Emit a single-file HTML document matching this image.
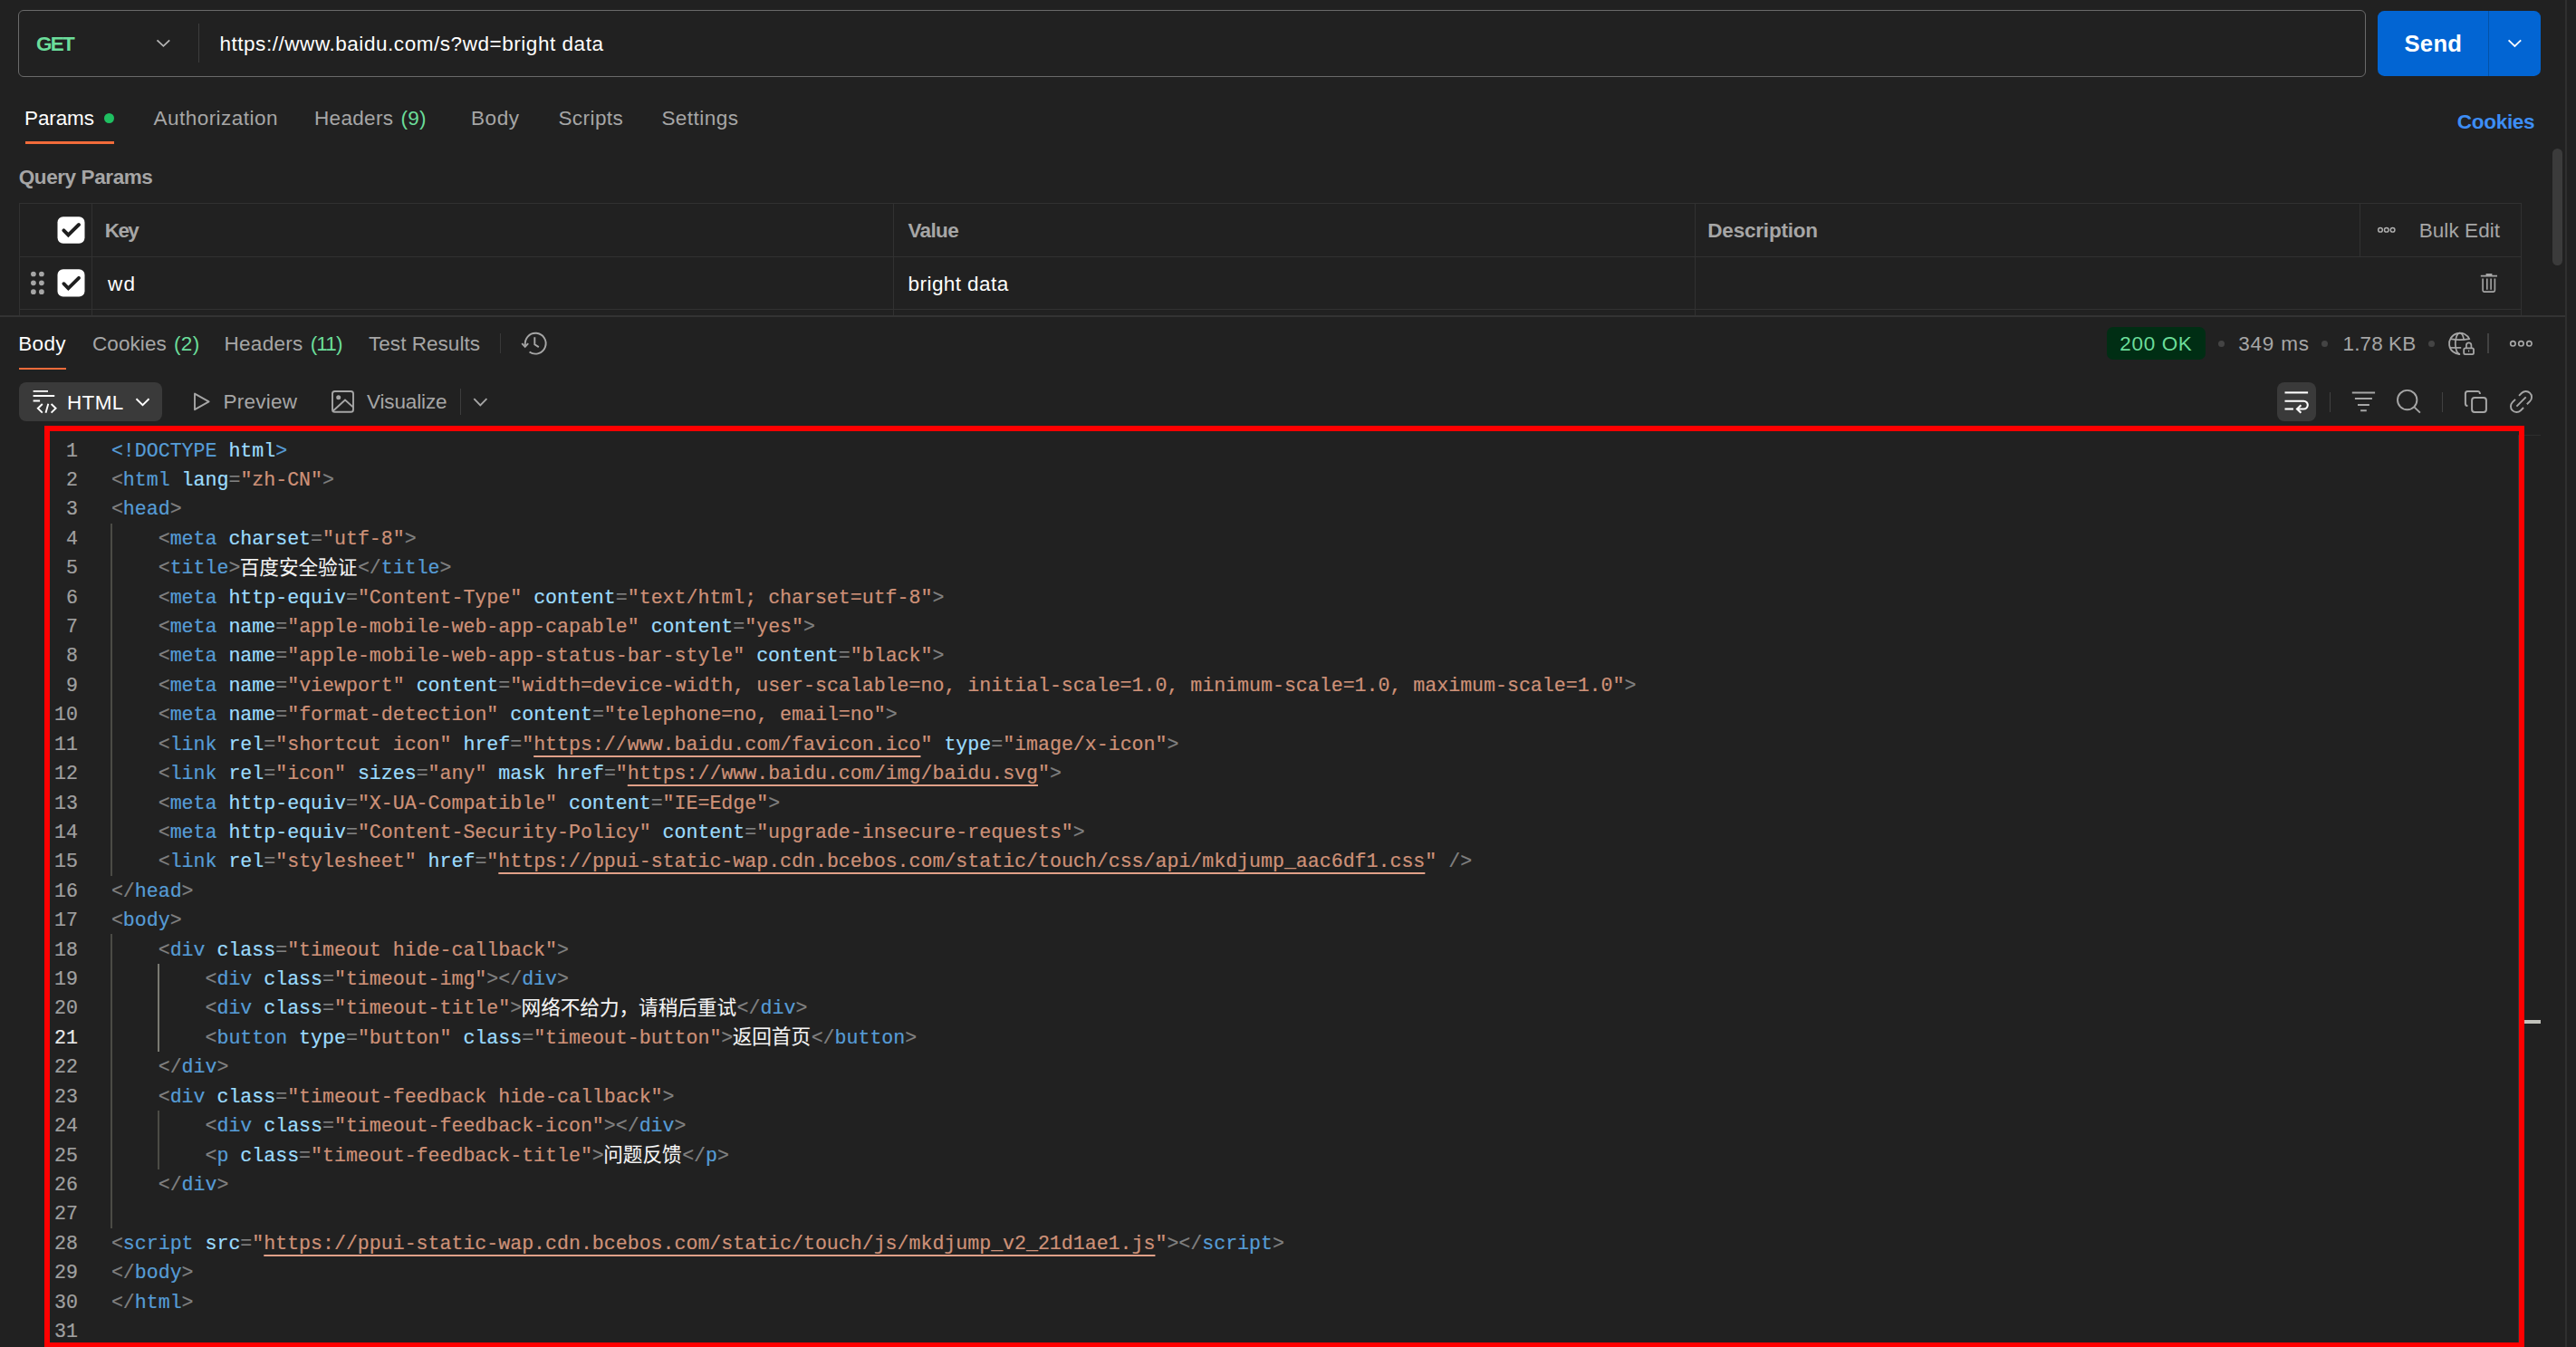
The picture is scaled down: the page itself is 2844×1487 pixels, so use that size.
<!DOCTYPE html>
<html lang="en"><head><meta charset="utf-8"><title>Postman</title>
<style>
html,body{margin:0;padding:0;background:#212121;}
body{width:2844px;height:1487px;position:relative;overflow:hidden;font-family:'Liberation Sans', 'Noto Sans CJK SC', sans-serif;}
.a{position:absolute;}
.t{position:absolute;white-space:pre;line-height:1;}
.code{position:absolute;left:0;top:481.55px;font-family:'Liberation Mono', 'Noto Sans CJK SC', monospace;font-size:21.6px;-webkit-text-stroke:0.2px currentColor;}
.ln{position:absolute;left:0;height:32.4px;line-height:32.4px;white-space:pre;}
.src{letter-spacing:-0.009px}
.num{position:absolute;left:40px;width:46px;text-align:right;color:#8c8c8c;}
.src{position:absolute;left:122.9px;}
.g{color:#808080} .k{color:#569cd6} .n{color:#9cdcfe} .s{color:#ce9178} .u{color:#ce9178;text-decoration:underline;text-decoration-color:#e0a088;text-decoration-thickness:2px;text-underline-offset:6px;text-decoration-skip-ink:none}
.c{color:#f4f4f4;line-height:0;font-weight:400;-webkit-text-stroke:0.1px currentColor;position:relative;top:0.6px;left:-0.6px;}
.guide{position:absolute;width:2px;background:#4a4a45;}
svg{position:absolute;overflow:visible}
</style></head><body>

<div class="a" style="left:2832px;top:0;width:2px;height:1487px;background:#2f2f2f"></div>
<div class="a" style="left:20px;top:11px;width:2592px;height:74px;border:1px solid #6a6a6a;border-radius:6px;box-sizing:border-box"></div>
<div class="a" style="left:219px;top:26px;width:1px;height:43px;background:#3d3d3d"></div>
<div class="a" style="left:2625px;top:11.8px;width:180.2px;height:72.4px;background:#0265d3;border-radius:7.3px"></div>
<div class="a" style="left:2747px;top:12px;width:1px;height:72px;background:#0452a6"></div>
<div class="a" style="left:28px;top:156.3px;width:98px;height:2.7px;background:#f26b3a"></div>
<div class="a" style="left:114.7px;top:124.7px;width:11.6px;height:11.6px;border-radius:50%;background:#1fbf61"></div>
<div class="a" style="left:2818px;top:164px;width:11px;height:129px;border-radius:6px;background:#3b3b3b"></div>
<div class="a" style="left:21px;top:224px;width:2763px;height:1px;background:#313131"></div>
<div class="a" style="left:21px;top:283px;width:2763px;height:1px;background:#313131"></div>
<div class="a" style="left:21px;top:341px;width:2763px;height:1px;background:#313131"></div>
<div class="a" style="left:21px;top:224px;width:1px;height:124px;background:#313131"></div>
<div class="a" style="left:101px;top:224px;width:1px;height:124px;background:#313131"></div>
<div class="a" style="left:986px;top:224px;width:1px;height:124px;background:#313131"></div>
<div class="a" style="left:1871px;top:224px;width:1px;height:124px;background:#313131"></div>
<div class="a" style="left:2605px;top:224px;width:1px;height:59px;background:#313131"></div>
<div class="a" style="left:2783px;top:224px;width:1px;height:124px;background:#313131"></div>
<div class="a" style="left:0;top:348px;width:2832px;height:2px;background:#333"></div>
<svg style="left:0;top:0" width="120" height="340" viewBox="0 0 120 340"><rect x="63.5" y="239.2" width="30" height="29.6" rx="6.2" fill="#fff"/><path d="M70.4 254.3 L75.4 259.4 L87.0 248.0" fill="none" stroke="#1f1f1f" stroke-width="3.9" stroke-linecap="round"/><rect x="63.5" y="297.2" width="30" height="30.4" rx="6.2" fill="#fff"/><path d="M70.4 313.2 L75.4 318.3 L87.0 306.9" fill="none" stroke="#1f1f1f" stroke-width="3.9" stroke-linecap="round"/><circle cx="36.9" cy="302.50" r="2.85" fill="#a6a6a6"/><circle cx="45.9" cy="302.50" r="2.85" fill="#a6a6a6"/><circle cx="36.9" cy="312.35" r="2.85" fill="#a6a6a6"/><circle cx="45.9" cy="312.35" r="2.85" fill="#a6a6a6"/><circle cx="36.9" cy="322.20" r="2.85" fill="#a6a6a6"/><circle cx="45.9" cy="322.20" r="2.85" fill="#a6a6a6"/></svg>
<div class="a" style="left:21px;top:405.7px;width:52px;height:2.5px;background:#f26b3a"></div>
<div class="a" style="left:552px;top:368px;width:1px;height:22px;background:#383838"></div>
<div class="a" style="left:21.2px;top:422px;width:157.6px;height:42.7px;border-radius:8px;background:#3a3a3a"></div>
<div class="a" style="left:508px;top:429px;width:1px;height:29px;background:#3d3d3d"></div>
<div class="a" style="left:2326.2px;top:361.2px;width:108.8px;height:35.8px;border-radius:7px;background:#002e14"></div>
<div class="a" style="left:2449.0px;top:375.7px;width:7.2px;height:7.2px;border-radius:50%;background:#444"></div>
<div class="a" style="left:2563.2000000000003px;top:375.7px;width:7.2px;height:7.2px;border-radius:50%;background:#444"></div>
<div class="a" style="left:2680.9px;top:375.7px;width:7.2px;height:7.2px;border-radius:50%;background:#444"></div>
<div class="a" style="left:2746px;top:368px;width:2px;height:22px;background:#424242"></div>
<div class="a" style="left:2513.8px;top:422px;width:43.2px;height:42.8px;border-radius:8px;background:#3a3a3a"></div>
<div class="a" style="left:2572px;top:433px;width:1px;height:22px;background:#414141"></div>
<div class="a" style="left:2696px;top:433px;width:1px;height:22px;background:#414141"></div>
<div class="a" style="left:2780px;top:480px;width:1px;height:1007px;background:#2c3636"></div>
<div class="a" style="left:2780px;top:480px;width:25px;height:1px;background:#2e2e2e"></div>
<div class="a" style="left:49px;top:470px;width:2738px;height:1030px;border:6px solid #ff0000;border-right-width:6.3px;border-bottom:none;box-sizing:border-box"></div>
<div class="a" style="left:49px;top:1481.8px;width:2738px;height:6px;background:#ff0000"></div>
<div class="a" style="left:2787px;top:1126.2px;width:18px;height:4px;background:#c2c2bb"></div>
<div class="t" style="left:39.90px;top:38.20px;font-size:22.5px;font-weight:700;color:#6bdd9a;letter-spacing:-1.733px">GET</div>
<div class="t" style="left:242.40px;top:37.90px;font-size:22.5px;font-weight:400;color:#ffffff;letter-spacing:0.547px">https://www.baidu.com/s?wd=bright data</div>
<div class="t" style="left:27.10px;top:120.00px;font-size:22.5px;font-weight:400;color:#ffffff;letter-spacing:-0.146px">Params</div>
<div class="t" style="left:169.50px;top:120.00px;font-size:22.5px;font-weight:400;color:#a6a6a6;letter-spacing:0.471px">Authorization</div>
<div class="t" style="left:347.00px;top:120.00px;font-size:22.5px;font-weight:400;color:#a6a6a6;letter-spacing:0.326px">Headers</div>
<div class="t" style="left:442.50px;top:120.00px;font-size:22.5px;font-weight:400;color:#6bdd9a;letter-spacing:0.250px">(9)</div>
<div class="t" style="left:520.00px;top:120.00px;font-size:22.5px;font-weight:400;color:#a6a6a6;letter-spacing:0.568px">Body</div>
<div class="t" style="left:616.40px;top:120.00px;font-size:22.5px;font-weight:400;color:#a6a6a6;letter-spacing:0.439px">Scripts</div>
<div class="t" style="left:730.40px;top:120.00px;font-size:22.5px;font-weight:400;color:#a6a6a6;letter-spacing:0.470px">Settings</div>
<div class="t" style="left:2712.80px;top:123.80px;font-size:22.5px;font-weight:700;color:#3d8ef5;letter-spacing:-0.289px">Cookies</div>
<div class="t" style="left:2654.40px;top:35.50px;font-size:25.6px;font-weight:700;color:#ffffff;letter-spacing:0.341px">Send</div>
<div class="t" style="left:20.70px;top:185.20px;font-size:22.5px;font-weight:700;color:#a6a6a6;letter-spacing:-0.399px">Query Params</div>
<div class="t" style="left:115.80px;top:244.40px;font-size:22.5px;font-weight:700;color:#a6a6a6;letter-spacing:-1.641px">Key</div>
<div class="t" style="left:1002.50px;top:244.40px;font-size:22.5px;font-weight:700;color:#a6a6a6;letter-spacing:-0.649px">Value</div>
<div class="t" style="left:1885.30px;top:244.40px;font-size:22.5px;font-weight:700;color:#a6a6a6;letter-spacing:-0.198px">Description</div>
<div class="t" style="left:2670.70px;top:244.20px;font-size:22.5px;font-weight:400;color:#a6a6a6;letter-spacing:0.075px">Bulk Edit</div>
<div class="t" style="left:119.00px;top:303.00px;font-size:22.5px;font-weight:400;color:#ffffff;letter-spacing:1.234px">wd</div>
<div class="t" style="left:1002.60px;top:303.00px;font-size:22.5px;font-weight:400;color:#ffffff;letter-spacing:0.427px">bright data</div>
<div class="t" style="left:20.30px;top:369.30px;font-size:22.5px;font-weight:400;color:#ffffff;letter-spacing:0.301px">Body</div>
<div class="t" style="left:102.00px;top:369.30px;font-size:22.5px;font-weight:400;color:#a6a6a6;letter-spacing:0.084px">Cookies</div>
<div class="t" style="left:192.00px;top:369.30px;font-size:22.5px;font-weight:400;color:#6bdd9a;letter-spacing:0.350px">(2)</div>
<div class="t" style="left:247.50px;top:369.30px;font-size:22.5px;font-weight:400;color:#a6a6a6;letter-spacing:0.292px">Headers</div>
<div class="t" style="left:342.80px;top:369.30px;font-size:22.5px;font-weight:400;color:#6bdd9a;letter-spacing:-0.915px">(11)</div>
<div class="t" style="left:407.00px;top:369.30px;font-size:22.5px;font-weight:400;color:#a6a6a6;letter-spacing:0.041px">Test Results</div>
<div class="t" style="left:73.90px;top:434.20px;font-size:22.5px;font-weight:400;color:#ffffff;letter-spacing:0.383px">HTML</div>
<div class="t" style="left:246.60px;top:433.20px;font-size:22.5px;font-weight:400;color:#a6a6a6;letter-spacing:0.228px">Preview</div>
<div class="t" style="left:405.00px;top:433.20px;font-size:22.5px;font-weight:400;color:#a6a6a6;letter-spacing:-0.130px">Visualize</div>
<div class="t" style="left:2340.30px;top:368.60px;font-size:22.5px;font-weight:400;color:#6bdd9a;letter-spacing:0.657px">200 OK</div>
<div class="t" style="left:2471.30px;top:368.60px;font-size:22.5px;font-weight:400;color:#a6a6a6;letter-spacing:0.761px">349 ms</div>
<div class="t" style="left:2586.60px;top:368.60px;font-size:22.5px;font-weight:400;color:#a6a6a6;letter-spacing:0.090px">1.78 KB</div>
<div class="code">
<div class="ln" style="top:0.00px"><span class="num" style="color:#a0a0a0">1</span><span class="src"><span class="k">&lt;!DOCTYPE</span> <span class="n">html</span><span class="k">&gt;</span></span></div>
<div class="ln" style="top:32.42px"><span class="num" style="color:#a0a0a0">2</span><span class="src"><span class="g">&lt;</span><span class="k">html</span> <span class="n">lang</span><span class="g">=</span><span class="s">&quot;zh-CN&quot;</span><span class="g">&gt;</span></span></div>
<div class="ln" style="top:64.83px"><span class="num" style="color:#a0a0a0">3</span><span class="src"><span class="g">&lt;</span><span class="k">head</span><span class="g">&gt;</span></span></div>
<div class="ln" style="top:97.25px"><span class="num" style="color:#a0a0a0">4</span><span class="src">    <span class="g">&lt;</span><span class="k">meta</span> <span class="n">charset</span><span class="g">=</span><span class="s">&quot;utf-8&quot;</span><span class="g">&gt;</span></span></div>
<div class="ln" style="top:129.67px"><span class="num" style="color:#a0a0a0">5</span><span class="src">    <span class="g">&lt;</span><span class="k">title</span><span class="g">&gt;</span><span class="c">百度安全验证</span><span class="g">&lt;/</span><span class="k">title</span><span class="g">&gt;</span></span></div>
<div class="ln" style="top:162.09px"><span class="num" style="color:#a0a0a0">6</span><span class="src">    <span class="g">&lt;</span><span class="k">meta</span> <span class="n">http-equiv</span><span class="g">=</span><span class="s">&quot;Content-Type&quot;</span> <span class="n">content</span><span class="g">=</span><span class="s">&quot;text/html; charset=utf-8&quot;</span><span class="g">&gt;</span></span></div>
<div class="ln" style="top:194.50px"><span class="num" style="color:#a0a0a0">7</span><span class="src">    <span class="g">&lt;</span><span class="k">meta</span> <span class="n">name</span><span class="g">=</span><span class="s">&quot;apple-mobile-web-app-capable&quot;</span> <span class="n">content</span><span class="g">=</span><span class="s">&quot;yes&quot;</span><span class="g">&gt;</span></span></div>
<div class="ln" style="top:226.92px"><span class="num" style="color:#a0a0a0">8</span><span class="src">    <span class="g">&lt;</span><span class="k">meta</span> <span class="n">name</span><span class="g">=</span><span class="s">&quot;apple-mobile-web-app-status-bar-style&quot;</span> <span class="n">content</span><span class="g">=</span><span class="s">&quot;black&quot;</span><span class="g">&gt;</span></span></div>
<div class="ln" style="top:259.34px"><span class="num" style="color:#a0a0a0">9</span><span class="src">    <span class="g">&lt;</span><span class="k">meta</span> <span class="n">name</span><span class="g">=</span><span class="s">&quot;viewport&quot;</span> <span class="n">content</span><span class="g">=</span><span class="s">&quot;width=device-width, user-scalable=no, initial-scale=1.0, minimum-scale=1.0, maximum-scale=1.0&quot;</span><span class="g">&gt;</span></span></div>
<div class="ln" style="top:291.75px"><span class="num" style="color:#a0a0a0">10</span><span class="src">    <span class="g">&lt;</span><span class="k">meta</span> <span class="n">name</span><span class="g">=</span><span class="s">&quot;format-detection&quot;</span> <span class="n">content</span><span class="g">=</span><span class="s">&quot;telephone=no, email=no&quot;</span><span class="g">&gt;</span></span></div>
<div class="ln" style="top:324.17px"><span class="num" style="color:#a0a0a0">11</span><span class="src">    <span class="g">&lt;</span><span class="k">link</span> <span class="n">rel</span><span class="g">=</span><span class="s">&quot;shortcut icon&quot;</span> <span class="n">href</span><span class="g">=</span><span class="s">&quot;</span><span class="u">https://www.baidu.com/favicon.ico</span><span class="s">&quot;</span> <span class="n">type</span><span class="g">=</span><span class="s">&quot;image/x-icon&quot;</span><span class="g">&gt;</span></span></div>
<div class="ln" style="top:356.59px"><span class="num" style="color:#a0a0a0">12</span><span class="src">    <span class="g">&lt;</span><span class="k">link</span> <span class="n">rel</span><span class="g">=</span><span class="s">&quot;icon&quot;</span> <span class="n">sizes</span><span class="g">=</span><span class="s">&quot;any&quot;</span> <span class="n">mask</span> <span class="n">href</span><span class="g">=</span><span class="s">&quot;</span><span class="u">https://www.baidu.com/img/baidu.svg</span><span class="s">&quot;</span><span class="g">&gt;</span></span></div>
<div class="ln" style="top:389.00px"><span class="num" style="color:#a0a0a0">13</span><span class="src">    <span class="g">&lt;</span><span class="k">meta</span> <span class="n">http-equiv</span><span class="g">=</span><span class="s">&quot;X-UA-Compatible&quot;</span> <span class="n">content</span><span class="g">=</span><span class="s">&quot;IE=Edge&quot;</span><span class="g">&gt;</span></span></div>
<div class="ln" style="top:421.42px"><span class="num" style="color:#a0a0a0">14</span><span class="src">    <span class="g">&lt;</span><span class="k">meta</span> <span class="n">http-equiv</span><span class="g">=</span><span class="s">&quot;Content-Security-Policy&quot;</span> <span class="n">content</span><span class="g">=</span><span class="s">&quot;upgrade-insecure-requests&quot;</span><span class="g">&gt;</span></span></div>
<div class="ln" style="top:453.84px"><span class="num" style="color:#a0a0a0">15</span><span class="src">    <span class="g">&lt;</span><span class="k">link</span> <span class="n">rel</span><span class="g">=</span><span class="s">&quot;stylesheet&quot;</span> <span class="n">href</span><span class="g">=</span><span class="s">&quot;</span><span class="u">https://ppui-static-wap.cdn.bcebos.com/static/touch/css/api/mkdjump_aac6df1.css</span><span class="s">&quot;</span><span class="g"> /&gt;</span></span></div>
<div class="ln" style="top:486.25px"><span class="num" style="color:#a0a0a0">16</span><span class="src"><span class="g">&lt;/</span><span class="k">head</span><span class="g">&gt;</span></span></div>
<div class="ln" style="top:518.67px"><span class="num" style="color:#a0a0a0">17</span><span class="src"><span class="g">&lt;</span><span class="k">body</span><span class="g">&gt;</span></span></div>
<div class="ln" style="top:551.09px"><span class="num" style="color:#a0a0a0">18</span><span class="src">    <span class="g">&lt;</span><span class="k">div</span> <span class="n">class</span><span class="g">=</span><span class="s">&quot;timeout hide-callback&quot;</span><span class="g">&gt;</span></span></div>
<div class="ln" style="top:583.51px"><span class="num" style="color:#a0a0a0">19</span><span class="src">        <span class="g">&lt;</span><span class="k">div</span> <span class="n">class</span><span class="g">=</span><span class="s">&quot;timeout-img&quot;</span><span class="g">&gt;</span><span class="g">&lt;/</span><span class="k">div</span><span class="g">&gt;</span></span></div>
<div class="ln" style="top:615.92px"><span class="num" style="color:#a0a0a0">20</span><span class="src">        <span class="g">&lt;</span><span class="k">div</span> <span class="n">class</span><span class="g">=</span><span class="s">&quot;timeout-title&quot;</span><span class="g">&gt;</span><span class="c">网络不给力，请稍后重试</span><span class="g">&lt;/</span><span class="k">div</span><span class="g">&gt;</span></span></div>
<div class="ln" style="top:648.34px"><span class="num" style="color:#e8e8e8">21</span><span class="src">        <span class="g">&lt;</span><span class="k">button</span> <span class="n">type</span><span class="g">=</span><span class="s">&quot;button&quot;</span> <span class="n">class</span><span class="g">=</span><span class="s">&quot;timeout-button&quot;</span><span class="g">&gt;</span><span class="c">返回首页</span><span class="g">&lt;/</span><span class="k">button</span><span class="g">&gt;</span></span></div>
<div class="ln" style="top:680.76px"><span class="num" style="color:#a0a0a0">22</span><span class="src">    <span class="g">&lt;/</span><span class="k">div</span><span class="g">&gt;</span></span></div>
<div class="ln" style="top:713.17px"><span class="num" style="color:#a0a0a0">23</span><span class="src">    <span class="g">&lt;</span><span class="k">div</span> <span class="n">class</span><span class="g">=</span><span class="s">&quot;timeout-feedback hide-callback&quot;</span><span class="g">&gt;</span></span></div>
<div class="ln" style="top:745.59px"><span class="num" style="color:#a0a0a0">24</span><span class="src">        <span class="g">&lt;</span><span class="k">div</span> <span class="n">class</span><span class="g">=</span><span class="s">&quot;timeout-feedback-icon&quot;</span><span class="g">&gt;</span><span class="g">&lt;/</span><span class="k">div</span><span class="g">&gt;</span></span></div>
<div class="ln" style="top:778.01px"><span class="num" style="color:#a0a0a0">25</span><span class="src">        <span class="g">&lt;</span><span class="k">p</span> <span class="n">class</span><span class="g">=</span><span class="s">&quot;timeout-feedback-title&quot;</span><span class="g">&gt;</span><span class="c">问题反馈</span><span class="g">&lt;/</span><span class="k">p</span><span class="g">&gt;</span></span></div>
<div class="ln" style="top:810.43px"><span class="num" style="color:#a0a0a0">26</span><span class="src">    <span class="g">&lt;/</span><span class="k">div</span><span class="g">&gt;</span></span></div>
<div class="ln" style="top:842.84px"><span class="num" style="color:#a0a0a0">27</span><span class="src"></span></div>
<div class="ln" style="top:875.26px"><span class="num" style="color:#a0a0a0">28</span><span class="src"><span class="g">&lt;</span><span class="k">script</span> <span class="n">src</span><span class="g">=</span><span class="s">&quot;</span><span class="u">https://ppui-static-wap.cdn.bcebos.com/static/touch/js/mkdjump_v2_21d1ae1.js</span><span class="s">&quot;</span><span class="g">&gt;</span><span class="g">&lt;/</span><span class="k">script</span><span class="g">&gt;</span></span></div>
<div class="ln" style="top:907.68px"><span class="num" style="color:#a0a0a0">29</span><span class="src"><span class="g">&lt;/</span><span class="k">body</span><span class="g">&gt;</span></span></div>
<div class="ln" style="top:940.09px"><span class="num" style="color:#a0a0a0">30</span><span class="src"><span class="g">&lt;/</span><span class="k">html</span><span class="g">&gt;</span></span></div>
<div class="ln" style="top:972.51px"><span class="num" style="color:#a0a0a0">31</span><span class="src"></span></div>
<div class="guide" style="left:122px;top:96.1px;height:389.0px;background:#4b4b45"></div>
<div class="guide" style="left:122px;top:549.9px;height:324.2px;background:#4b4b45"></div>
<div class="guide" style="left:174px;top:582.3px;height:97.3px;background:#7a7a72"></div>
<div class="guide" style="left:174px;top:744.4px;height:64.8px;background:#4b4b45"></div>
</div>
<svg style="left:0;top:0" width="2844" height="1487" viewBox="0 0 2844 1487">
<path d="M173.5 44.3 L180.4 50.8 L187.2 44.3" fill="none" stroke="#b4b4b4" stroke-width="1.8" />
<path d="M2769.6 44.4 L2776.4 51 L2783.2 44.4" fill="none" stroke="#ffffff" stroke-width="1.8" />
<path d="M36.6 431.9 H53 M36.6 437 H60.2 M36.6 442.5 H44.1" fill="none" stroke="#ffffff" stroke-width="1.9" />
<path d="M46.8 446 L41.8 450.8 L46.8 455.6 M53.3 445.8 L50.5 455.8 M56.6 446 L61.6 450.8 L56.6 455.6" fill="none" stroke="#ffffff" stroke-width="1.9" />
<path d="M150.5 440.2 L157.5 447.1 L164.5 440.2" fill="none" stroke="#ffffff" stroke-width="1.9" />
<path d="M215 434.6 L215 452.2 L230.6 443.4 Z" fill="none" stroke="#a6a6a6" stroke-width="1.9" stroke-linejoin="round"/>
<rect x="367" y="432" width="23" height="22.8" rx="2.6" fill="none" stroke="#a6a6a6" stroke-width="1.9"/>
<circle cx="373.7" cy="438.8" r="2.5" fill="#a6a6a6"/>
<path d="M367.6 453.8 L381 441.6 L390 449.6" fill="none" stroke="#a6a6a6" stroke-width="1.9" />
<path d="M523.3 440.2 L530.3 447.4 L537.4 440.2" fill="none" stroke="#a6a6a6" stroke-width="1.9" />
<path d="M580.00 381.30 A11.4 11.4 0 1 1 584.54 388.40" fill="none" stroke="#a6a6a6" stroke-width="1.9" />
<path d="M576.2 379.2 L579.7 382.9 L583.2 379.2" fill="none" stroke="#a6a6a6" stroke-width="1.9" />
<path d="M590.3 372.3 V380.2 L594.8 383.1" fill="none" stroke="#a6a6a6" stroke-width="1.9" />
<path d="M2726.55 374.92 A11.7 11.7 0 1 0 2716.11 390.99" fill="none" stroke="#a6a6a6" stroke-width="1.8" />
<path d="M2715.70 391.00 A4.9 11.7 0 0 1 2715.70 367.60 A4.9 11.7 0 0 1 2720.30 375.30" fill="none" stroke="#a6a6a6" stroke-width="1.7" />
<path d="M2705.30 374.10 Q2715.70 376.10 2726.10 374.10" fill="none" stroke="#a6a6a6" stroke-width="1.7" />
<path d="M2705.10 383.90 H2717.20" fill="none" stroke="#a6a6a6" stroke-width="1.7" />
<rect x="2720.2" y="384.3" width="10.8" height="6.9" rx="1.6" fill="#212121" stroke="#a6a6a6" stroke-width="1.8"/>
<path d="M2722.9 384 V381.2 A2.75 2.75 0 0 1 2728.4 381.2 V384" fill="none" stroke="#a6a6a6" stroke-width="1.7" />
<path d="M2725.6 386.4 V388.6" fill="none" stroke="#a6a6a6" stroke-width="1.2" />
<circle cx="2774.4" cy="379.3" r="2.7" fill="none" stroke="#a6a6a6" stroke-width="1.7"/>
<circle cx="2783.4" cy="379.3" r="2.7" fill="none" stroke="#a6a6a6" stroke-width="1.7"/>
<circle cx="2792.4" cy="379.3" r="2.7" fill="none" stroke="#a6a6a6" stroke-width="1.7"/>
<circle cx="2628" cy="253.8" r="2.35" fill="none" stroke="#b0b0b0" stroke-width="1.4"/>
<circle cx="2634.8" cy="253.8" r="2.35" fill="none" stroke="#b0b0b0" stroke-width="1.4"/>
<circle cx="2641.6" cy="253.8" r="2.35" fill="none" stroke="#b0b0b0" stroke-width="1.4"/>
<path d="M2738.8 304.6 H2757 M2744.6 303 H2751.4" fill="none" stroke="#a6a6a6" stroke-width="1.8" />
<path d="M2741.1 307.4 V320.6 Q2741.1 322.1 2742.6 322.1 H2752.9 Q2754.4 322.1 2754.4 320.6 V307.4" fill="none" stroke="#a6a6a6" stroke-width="1.6" />
<path d="M2745.8 307.4 V319.8 M2750.1 307.4 V319.8" fill="none" stroke="#a6a6a6" stroke-width="1.6" />
<path d="M2522.5 433.4 H2548.1" fill="none" stroke="#ffffff" stroke-width="2.1" />
<path d="M2522.5 442.7 H2543.4 A4.4 4.4 0 0 1 2543.4 451.5 H2536.4" fill="none" stroke="#ffffff" stroke-width="2.1" />
<path d="M2522.5 451.5 H2531.9" fill="none" stroke="#ffffff" stroke-width="2.1" />
<path d="M2540.4 447.2 L2536 451.5 L2540.4 455.8" fill="none" stroke="#ffffff" stroke-width="2.1" />
<path d="M2596.8 433.4 H2622.1 M2599.9 439.9 H2618.9 M2603 446.9 H2615.9 M2606.1 453.2 H2612.8" fill="none" stroke="#a6a6a6" stroke-width="2" />
<circle cx="2657.7" cy="441.6" r="10.7" fill="none" stroke="#a6a6a6" stroke-width="1.9"/>
<path d="M2665.4 449.4 L2671.9 455.6" fill="none" stroke="#a6a6a6" stroke-width="1.9" />
<rect x="2729.1" y="439" width="15.8" height="16" rx="3" fill="none" stroke="#a6a6a6" stroke-width="2"/>
<path d="M2737.9 434.9 V434.4 A2.5 2.5 0 0 0 2735.4 431.9 H2724.4 A2.5 2.5 0 0 0 2721.9 434.4 V445.6 A2.5 2.5 0 0 0 2724.4 448.1" fill="none" stroke="#a6a6a6" stroke-width="2" />
<path d="M2781.03 436.92 L2784.17 433.78 A6.4 6.4 0 0 1 2793.22 442.83 L2789.83 446.22" fill="none" stroke="#a6a6a6" stroke-width="1.9" />
<path d="M2777.02 440.93 L2773.78 444.17 A6.4 6.4 0 0 0 2782.83 453.22 L2786.07 449.98" fill="none" stroke="#a6a6a6" stroke-width="1.9" />
<path d="M2778.4 448.6 L2788.7 438.4" fill="none" stroke="#a6a6a6" stroke-width="1.9" />
</svg>
</body></html>
